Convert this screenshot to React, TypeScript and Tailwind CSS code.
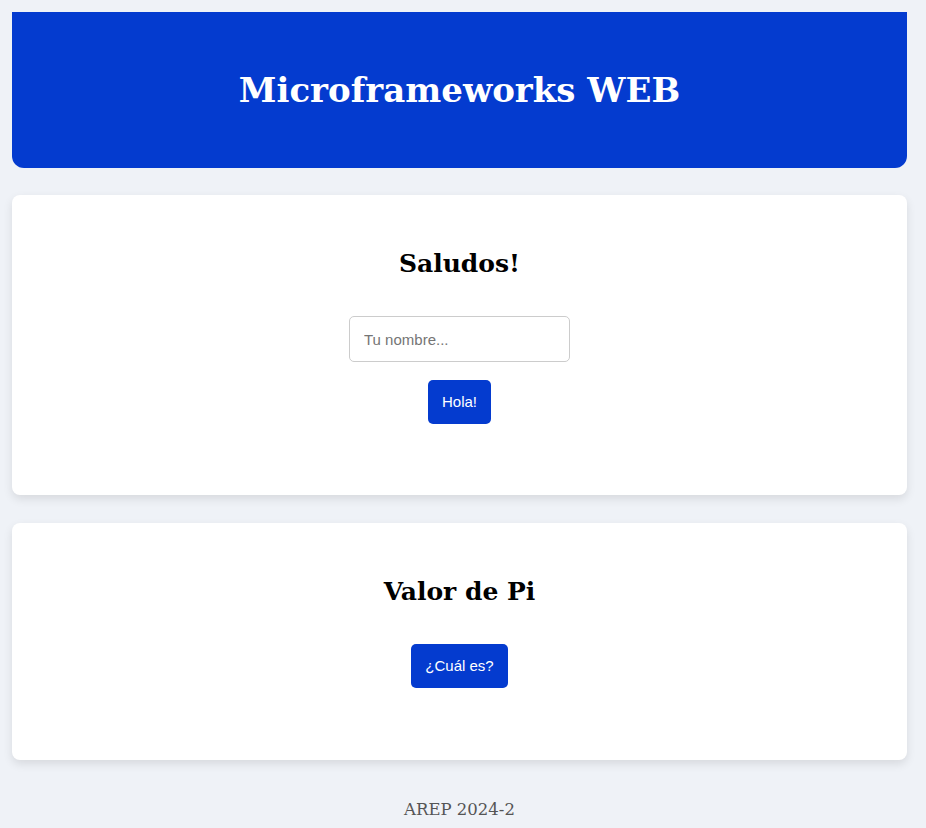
import React from "react";

export default function App() {
  const serif = { fontFamily: '"DejaVu Serif", Georgia, serif' };
  return (
    <div className="min-h-[828px] bg-[#eff2f7] pt-3" style={{ fontFamily: '"Liberation Sans", Arial, sans-serif' }}>
      <div className="ml-3 w-[895px]">
        <header className="flex h-[156px] items-center justify-center rounded-b-[12px] bg-[#043bcf]">
          <h1 className="text-[34px] font-bold leading-[44px] text-white" style={serif}>
            Microframeworks WEB
          </h1>
        </header>

        <section className="mt-[27px] flex flex-col items-center rounded-[8px] bg-white pt-[53px] pb-[71px] shadow-[0_4px_10px_rgba(0,0,0,0.1)]">
          <h2 className="text-[25px] font-bold leading-[32px] text-black" style={serif}>
            Saludos!
          </h2>
          <input
            type="text"
            placeholder="Tu nombre..."
            className="mt-[36px] h-[46px] w-[221px] rounded-[5px] border border-[#cccccc] bg-white px-[14px] text-[15px] text-black outline-none placeholder:text-[#757575]"
          />
          <button className="mt-[18px] h-[44px] rounded-[5px] bg-[#043bcf] px-[14px] text-[15px] text-white">
            Hola!
          </button>
        </section>

        <section className="mt-[28px] flex flex-col items-center rounded-[8px] bg-white pt-[53px] pb-[72px] shadow-[0_4px_10px_rgba(0,0,0,0.1)]">
          <h2 className="text-[25px] font-bold leading-[32px] text-black" style={serif}>
            Valor de Pi
          </h2>
          <button className="mt-[36px] h-[44px] rounded-[5px] bg-[#043bcf] px-[14px] text-[15px] text-white">
            ¿Cuál es?
          </button>
        </section>

        <footer className="mt-[38px] pb-[6px] text-center text-[16.5px] leading-[24px] text-[#555555]" style={serif}>
          AREP 2024-2
        </footer>
      </div>
    </div>
  );
}
